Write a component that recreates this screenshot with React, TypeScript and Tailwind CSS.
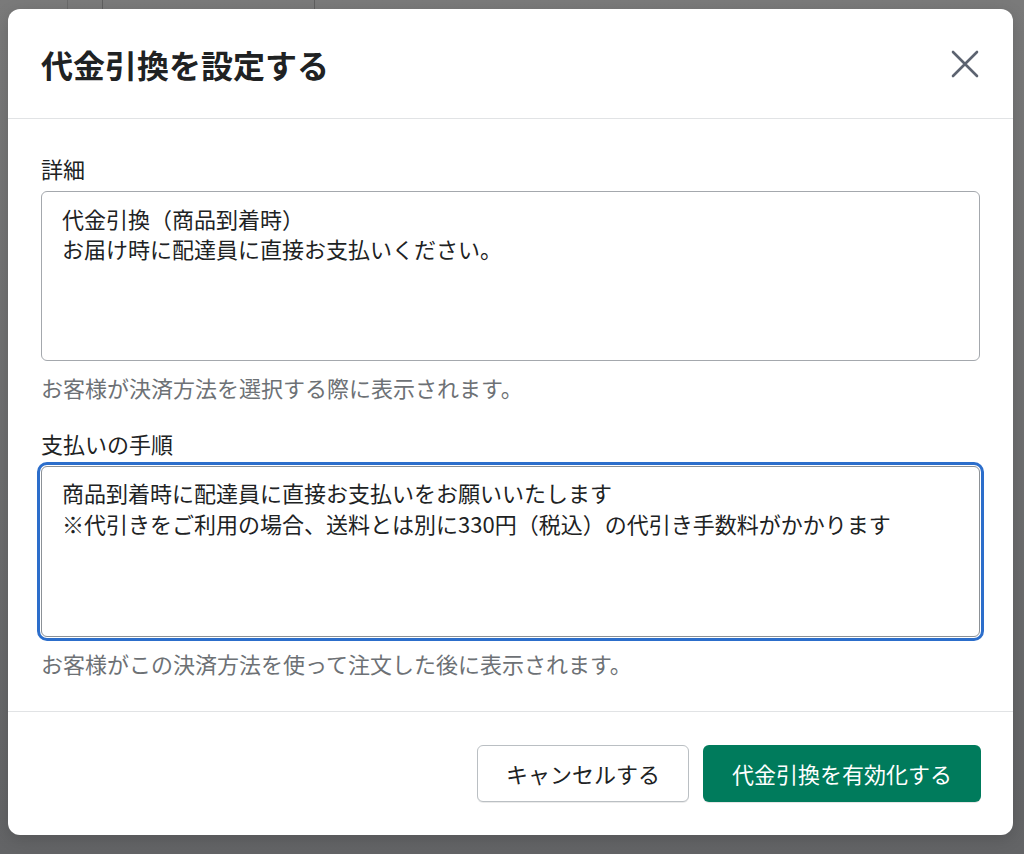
import { useState } from "react";

const font = { fontFamily: '"Noto Sans CJK JP", "Noto Sans", sans-serif' };

function Field({
  label,
  value,
  help,
  focused,
}: {
  label: string;
  value: string;
  help: string;
  focused?: boolean;
}) {
  const [text, setText] = useState(value);
  return (
    <div className="flex flex-col">
      <label className="mb-2 text-[22px] leading-[30px] text-[#202223]">{label}</label>
      <textarea
        value={text}
        onChange={(e) => setText(e.target.value)}
        style={font}
        className={
          focused
            ? "h-[171px] w-full resize-none rounded-[6px] border border-[#8c9196] bg-white px-5 pt-[10px] text-[22px] leading-[31px] text-[#202223] outline-[3px] outline-offset-[1px] outline-[#2c6ecb]"
            : "h-[170px] w-full resize-none rounded-[6px] border border-[#a4a8ad] bg-white px-5 pt-[11px] text-[22px] leading-[30px] text-[#202223] outline-none"
        }
      />
      <p className="mt-[11px] text-[22px] leading-[30px] text-[#6d7175]">{help}</p>
    </div>
  );
}

export default function App() {
  return (
    <div
      style={font}
      className="flex h-[854px] w-[1024px] flex-col overflow-hidden bg-gradient-to-b from-[#7a7a7a] to-[#636466]"
    >
      {/* page behind the overlay */}
      <div className="flex h-[9px] shrink-0">
        <div className="w-[68px] border-r border-[#6a6a6a]" />
        <div className="w-[35px] border-r border-[#5f5f5f]" />
        <div className="w-[212px] border-r border-[#5f5f5f]" />
        <div className="flex-1" />
      </div>

      <div className="ml-2 flex w-[1005px] flex-col rounded-[12px] bg-white shadow-[0_4px_16px_rgba(0,0,0,0.15)]">
        <div className="flex h-[110px] items-center justify-between border-b border-[#e1e3e5] pl-[33px] pr-[33px]">
          <h1 className="text-[32px] font-bold leading-[40px] text-[#202223]">代金引換を設定する</h1>
          <button className="flex h-[30px] w-[30px] items-center justify-center text-[#5c6370]" aria-label="閉じる">
            <svg width="28" height="28" viewBox="0 0 28 28" fill="none" stroke="currentColor" strokeWidth="2.6" strokeLinecap="round">
              <path d="M2 2 L26 26 M26 2 L2 26" />
            </svg>
          </button>
        </div>

        <div className="flex flex-col gap-[26px] border-b border-[#e1e3e5] px-[33px] pb-[33px] pt-[34px]">
          <Field
            label="詳細"
            value={"代金引換（商品到着時）\nお届け時に配達員に直接お支払いください。"}
            help="お客様が決済方法を選択する際に表示されます。"
          />
          <Field
            focused
            label="支払いの手順"
            value={
              "商品到着時に配達員に直接お支払いをお願いいたします\n※代引きをご利用の場合、送料とは別に330円（税込）の代引き手数料がかかります"
            }
            help="お客様がこの決済方法を使って注文した後に表示されます。"
          />
        </div>

        <div className="flex h-[123px] items-center justify-end gap-[14px] pr-[32px]">
          <button className="h-[57px] rounded-[6px] border border-[#babfc3] bg-white px-[28px] text-[22px] text-[#202223] shadow-[0_1px_0_rgba(0,0,0,0.08)]">
            キャンセルする
          </button>
          <button className="h-[57px] rounded-[6px] bg-[#007b5c] px-[29px] text-[22px] text-white shadow-[0_1px_0_rgba(0,0,0,0.1)]">
            代金引換を有効化する
          </button>
        </div>
      </div>
    </div>
  );
}
